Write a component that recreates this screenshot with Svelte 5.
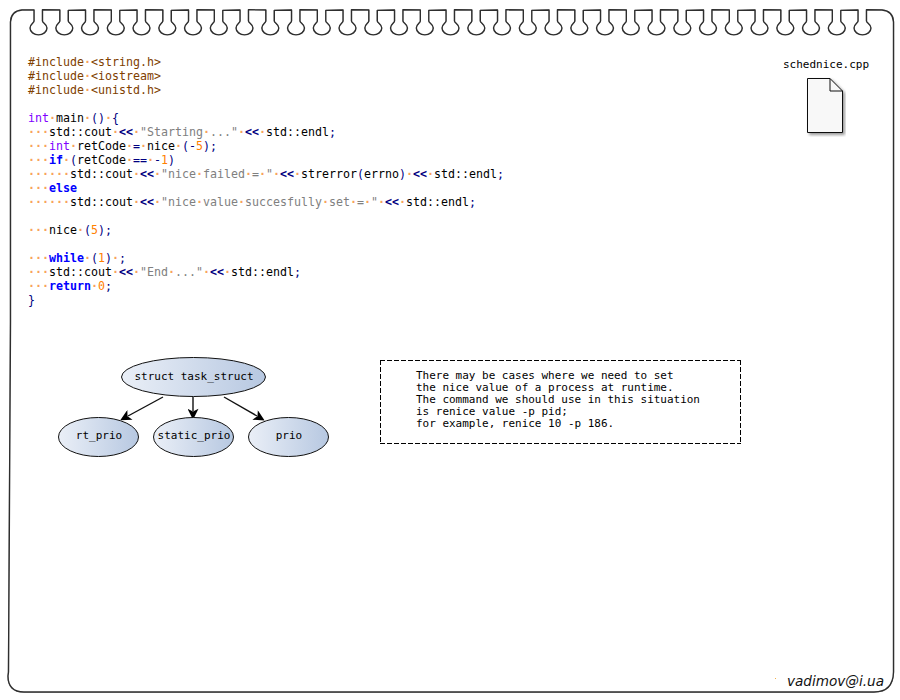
<script>
  const source = `#include <string.h>
#include <iostream>
#include <unistd.h>

int main () {
   std::cout << "Starting ..." << std::endl;
   int retCode = nice (-5);
   if (retCode == -1)
      std::cout << "nice failed = " << strerror(errno) << std::endl;
   else
      std::cout << "nice value succesfully set = " << std::endl;

   nice (5);

   while (1) ;
   std::cout << "End ..." << std::endl;
   return 0;
}`;

  const tokenRe = /( +)|("[^"]*")|\b(int)\b|\b(if|else|while|return)\b|(\d+)|(<<)|(==|[=\-(){};])|([A-Za-z_:]+|.)/g;

  function withSpaces(text, cls) {
    return text.split(/( +)/).filter(Boolean).map((part) =>
      part[0] === ' ' ? { cls: 'ws', text: '·'.repeat(part.length) } : { cls, text: part }
    );
  }

  function tokenize(line) {
    if (line.startsWith('#')) return withSpaces(line, 'pre');
    const out = [];
    for (const m of line.matchAll(tokenRe)) {
      if (m[1]) out.push({ cls: 'ws', text: '·'.repeat(m[1].length) });
      else if (m[2]) out.push(...withSpaces(m[2], 'str'));
      else if (m[3]) out.push({ cls: 'type', text: m[3] });
      else if (m[4]) out.push({ cls: 'kw', text: m[4] });
      else if (m[5]) out.push({ cls: 'num', text: m[5] });
      else if (m[6]) out.push({ cls: 'shift', text: m[6] });
      else if (m[7]) out.push({ cls: 'op', text: m[7] });
      else out.push({ cls: 'id', text: m[8] });
    }
    return out;
  }

  const lines = source.split('\n').map(tokenize);

  const noteLines = [
    'There may be cases where we need to set',
    'the nice value of a process at runtime.',
    'The command we should use in this situation',
    'is renice value -p pid;',
    'for example, renice 10 -p 186.'
  ];

  function framePath() {
    let d = 'M8.5 672 Q10 500 10.5 322 L10.5 22 Q11 11 22 10 L34 10';
    for (let i = 0; i < 33; i++) {
      const cx = 38.5 + 25.75 * i;
      const wobble = i % 2 ? 0.4 : -0.2;
      d += ` L${(cx - 4.5).toFixed(1)} 10 L${(cx - 4.5).toFixed(1)} 21`;
      d += ` C${(cx - 4.5).toFixed(1)} 23 ${(cx - 8.5).toFixed(1)} 24 ${(cx - 8.5).toFixed(1)} 28`;
      d += ` A8.2 6.6 0 0 0 ${(cx + 8.5).toFixed(1)} 28`;
      d += ` C${(cx + 8.5).toFixed(1)} 24 ${(cx + 4).toFixed(1)} 23 ${(cx + 4).toFixed(1)} 21`;
      d += ` L${(cx + 4).toFixed(1)} ${(10 + wobble).toFixed(1)}`;
    }
    d += ' L882 10 Q893 11 893.5 22 L893.5 672 Q893 692 874 692 L24 692 Q8 692 8 676 Z';
    return d;
  }
  const frame = framePath();

  const nodes = [
    { cx: 143.5, cy: 22, rx: 72, dy: 3, label: 'struct task_struct' },
    { cx: 48.5, cy: 82, rx: 40, dy: 2, label: 'rt_prio' },
    { cx: 143.5, cy: 82, rx: 40, dy: 2, label: 'static_prio' },
    { cx: 238.5, cy: 82, rx: 40, dy: 2, label: 'prio' }
  ];
  const edges = [
    [113, 42, 78, 61],
    [143, 42, 143, 56],
    [174, 42, 207, 61]
  ];
</script>

<div class="page">
  <svg class="frame" width="900" height="700" viewBox="0 0 900 700" aria-hidden="true">
    <path d={frame} />
  </svg>

  <div class="top">
    <pre class="code">{#each lines as line}<div class="line">{#each line as t}<span class={t.cls}>{t.text}</span>{/each}</div>{/each}</pre>
    <figure class="file">
      <figcaption>schednice.cpp</figcaption>
      <svg width="40" height="60" viewBox="0 0 40 60" aria-hidden="true">
        <defs>
          <filter id="fshadow" x="-20%" y="-20%" width="150%" height="140%">
            <feDropShadow dx="2" dy="2" stdDeviation="1.5" flood-color="#000" flood-opacity="0.4" />
          </filter>
        </defs>
        <path class="sheet" d="M1.5 1.5 H24 L36.5 14 V55.5 H1.5 Z" filter="url(#fshadow)" />
        <path class="fold" d="M24 1.5 V14 H36.5" />
      </svg>
    </figure>
  </div>

  <div class="bottom">
    <svg class="diagram" width="290" height="110" viewBox="0 0 290 110" role="img" aria-label="struct task_struct diagram">
      <defs>
        <linearGradient id="nodefill" x1="0" x2="1" y1="0" y2="0">
          <stop offset="0" stop-color="#eaeff7" />
          <stop offset="1" stop-color="#b7c8e1" />
        </linearGradient>
        <marker id="head" viewBox="0 0 10 10" refX="2" refY="5" markerWidth="12" markerHeight="11" markerUnits="userSpaceOnUse" orient="auto">
          <path d="M0 0 L10 5 L0 10 L2.5 5 Z" fill="#000" />
        </marker>
      </defs>
      {#each edges as e}
        <line x1={e[0]} y1={e[1]} x2={e[2]} y2={e[3]} marker-end="url(#head)" />
      {/each}
      {#each nodes as n}
        <ellipse cx={n.cx} cy={n.cy} rx={n.rx} ry="19.5" fill="url(#nodefill)" />
        <text x={n.cx + 0.5} y={n.cy + n.dy}>{n.label}</text>
      {/each}
    </svg>

    <div class="note">
      {#each noteLines as l}<div>{l}</div>{/each}
    </div>
  </div>

  <footer class="sig"><span class="speck"></span>vadimov@i.ua</footer>
</div>

<style>
  :global(body) {
    margin: 0;
    background: #fff;
  }
  .page {
    position: relative;
    width: 900px;
    height: 700px;
    box-sizing: border-box;
    padding-top: 55px;
    display: flex;
    flex-direction: column;
    overflow: hidden;
    background: #fff;
    font-family: "DejaVu Sans Mono", monospace;
    color: #000;
  }
  .frame {
    position: absolute;
    left: 0;
    top: 0;
    filter: drop-shadow(0.5px 0.5px 0.6px rgba(0, 0, 0, 0.35));
  }
  .frame path {
    fill: #fff;
    stroke: #2e2e2e;
    stroke-width: 1.4;
    stroke-linejoin: round;
  }
  .top {
    position: relative;
    display: flex;
    justify-content: space-between;
    align-items: flex-start;
    padding: 0 31px 0 28px;
  }
  .code {
    margin: 0;
    font: 11.63px/14px "DejaVu Sans Mono", monospace;
  }
  .line {
    height: 14px;
    white-space: pre;
  }
  .ws { color: #f7a35c; font-weight: bold; }
  .pre { color: #804000; }
  .str { color: #808080; }
  .type { color: #8000ff; }
  .kw { color: #0000ff; font-weight: bold; }
  .num { color: #ff8000; }
  .shift { color: #000080; font-weight: bold; }
  .op { color: #000080; }
  .id { color: #000; }
  .file {
    margin: 3px 0 0;
    width: 86px;
    display: flex;
    flex-direction: column;
    align-items: center;
    font-size: 11px;
    line-height: 14px;
  }
  .file figcaption {
    white-space: nowrap;
  }
  .file svg {
    margin: 5px 0 0 -1px;
    display: block;
  }
  .sheet {
    fill: #f8f8f8;
    stroke: #111;
    stroke-width: 1;
  }
  .fold {
    fill: none;
    stroke: #111;
    stroke-width: 1;
  }
  .bottom {
    position: relative;
    margin-top: 48px;
    display: flex;
    align-items: flex-start;
  }
  .diagram {
    margin-left: 50px;
    display: block;
  }
  .diagram ellipse {
    stroke: #111;
    stroke-width: 1;
  }
  .diagram line {
    stroke: #111;
    stroke-width: 1.4;
  }
  .diagram text {
    font: 11px "DejaVu Sans Mono", monospace;
    text-anchor: middle;
    fill: #000;
  }
  .note {
    margin: 5px 0 0 40px;
    width: 361px;
    height: 84px;
    box-sizing: border-box;
    padding: 10px 0 0 36px;
    font-size: 10.97px;
    line-height: 12px;
    white-space: pre;
    background-image:
      repeating-linear-gradient(90deg, #000 0 5px, transparent 5px 7px),
      repeating-linear-gradient(90deg, #000 0 5px, transparent 5px 7px),
      repeating-linear-gradient(180deg, #000 0 5px, transparent 5px 7px),
      repeating-linear-gradient(180deg, #000 0 5px, transparent 5px 7px);
    background-size: 100% 1px, 100% 1px, 1px 100%, 1px 100%;
    background-position: 0 0, 0 100%, 0 0, 100% 0;
    background-repeat: no-repeat;
  }
  .sig {
    position: relative;
    margin-top: auto;
    margin-bottom: 11px;
    padding-right: 16px;
    text-align: right;
    font: italic 13.6px/16px "DejaVu Sans", sans-serif;
    color: #111;
  }
  .speck {
    position: absolute;
    right: 124px;
    top: 5px;
    width: 1px;
    height: 1px;
    background: #f2b04a;
  }
</style>
